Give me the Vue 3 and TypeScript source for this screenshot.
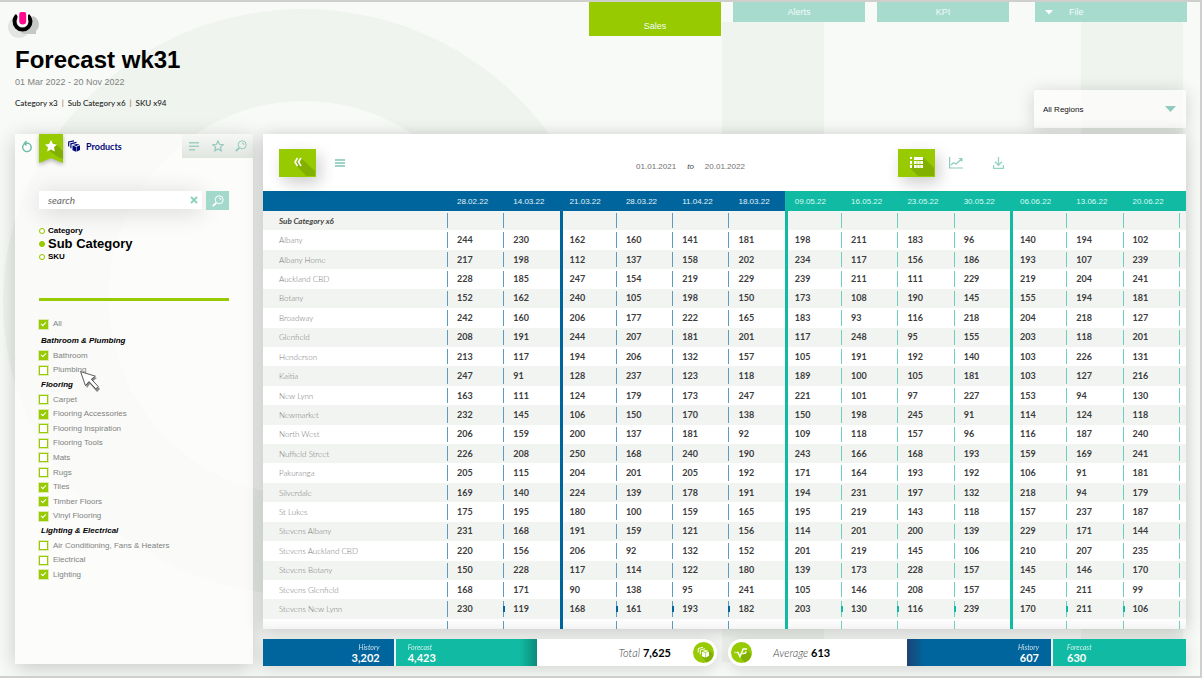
<script setup lang="ts">
import { ref } from 'vue'

interface Item { name: string; checked: boolean }
interface Group { title: string; items: Item[] }

const tabs: string[] = ['Sales', 'Alerts', 'KPI']
const levels: string[] = ['Category', 'Sub Category', 'SKU']
const level = ref('Sub Category')
const query = ref('')
const all = ref(true)

const make = (title: string, items: [string, boolean][]): Group => ({
  title,
  items: items.map(([name, checked]) => ({ name, checked })),
})

const groups = ref<Group[]>([
  make('Bathroom & Plumbing', [['Bathroom', true], ['Plumbing', false]]),
  make('Flooring', [
    ['Carpet', false], ['Flooring Accessories', true], ['Flooring Inspiration', false],
    ['Flooring Tools', false], ['Mats', false], ['Rugs', false], ['Tiles', true],
    ['Timber Floors', true], ['Vinyl Flooring', true],
  ]),
  make('Lighting & Electrical', [
    ['Air Conditioning, Fans & Heaters', false], ['Electrical', false], ['Lighting', true],
  ]),
])

const dates: string[] = [
  '28.02.22', '14.03.22', '21.03.22', '28.03.22', '11.04.22', '18.03.22', '09.05.22',
  '16.05.22', '23.05.22', '30.05.22', '06.06.22', '13.06.22', '20.06.22',
]

const rows: [string, number[]][] = [
  ['Albany', [244, 230, 162, 160, 141, 181, 198, 211, 183, 96, 140, 194, 102]],
  ['Albany Home', [217, 198, 112, 137, 158, 202, 234, 117, 156, 186, 193, 107, 239]],
  ['Auckland CBD', [228, 185, 247, 154, 219, 229, 239, 211, 111, 229, 219, 204, 241]],
  ['Botany', [152, 162, 240, 105, 198, 150, 173, 108, 190, 145, 155, 194, 181]],
  ['Broadway', [242, 160, 206, 177, 222, 165, 183, 93, 116, 218, 204, 218, 127]],
  ['Glenfield', [208, 191, 244, 207, 181, 201, 117, 248, 95, 155, 203, 118, 201]],
  ['Henderson', [213, 117, 194, 206, 132, 157, 105, 191, 192, 140, 103, 226, 131]],
  ['Kaitia', [247, 91, 128, 237, 123, 118, 189, 100, 105, 181, 103, 127, 216]],
  ['New Lynn', [163, 111, 124, 179, 173, 247, 221, 101, 97, 227, 153, 94, 130]],
  ['Newmarket', [232, 145, 106, 150, 170, 138, 150, 198, 245, 91, 114, 124, 118]],
  ['North West', [206, 159, 200, 137, 181, 92, 109, 118, 157, 96, 116, 187, 240]],
  ['Nuffield Street', [226, 208, 250, 168, 240, 190, 243, 166, 168, 193, 159, 169, 241]],
  ['Pakuranga', [205, 115, 204, 201, 205, 192, 171, 164, 193, 192, 106, 91, 181]],
  ['Silverdale', [169, 140, 224, 139, 178, 191, 194, 231, 197, 132, 218, 94, 179]],
  ['St Lukes', [175, 195, 180, 100, 159, 165, 195, 219, 143, 118, 157, 237, 187]],
  ['Stevens Albany', [231, 168, 191, 159, 121, 156, 114, 201, 200, 139, 229, 171, 144]],
  ['Stevens Auckland CBD', [220, 156, 206, 92, 132, 152, 201, 219, 145, 106, 210, 207, 235]],
  ['Stevens Botany', [150, 228, 117, 114, 122, 180, 139, 173, 228, 157, 145, 146, 170]],
  ['Stevens Glenfield', [168, 171, 90, 138, 95, 241, 105, 146, 208, 157, 245, 211, 99]],
  ['Stevens New Lynn', [230, 119, 168, 161, 193, 182, 203, 130, 116, 239, 170, 211, 106]],
]

const cellClass = (i: number) => ({
  forecast: i >= 6,
  thick: i === 2 || i === 6 || i === 10,
})
</script>

<template>
  <div class="page">
    <svg class="backdrop" width="1202" height="678" aria-hidden="true">
      <path
        fill="#eff4ee" fill-rule="evenodd"
        d="M3 302a300 293 0 1 0 600 0a300 293 0 1 0 -600 0zM109 298a195 197 0 1 0 390 0a195 197 0 1 0 -390 0z"
      />
      <path fill="#eff4ee" d="M722 22h102v640h-102zM1081 22h102v640h-102z" />
    </svg>

    <header class="top">
      <div class="brand">
        <svg class="logo" width="36" height="32" viewBox="0 0 36 32" aria-hidden="true">
          <circle cx="12" cy="19" r="11" fill="#e3e5e2" />
          <path fill="#c6c8c6" d="M14 25l12-17a9 9 0 0 1 3 15v3H17z" />
          <path fill="none" stroke="#000" stroke-width="4" d="M10.200 7.500a8 8 0 1 0 10.600 0" />
          <path fill="#fff" d="M10.500 3h10.500v10q0 5.500-5.300 5.500t-5.200-5.500z" />
          <path fill="#ff0a8c" d="M12.200 6q0-2 2-2h3q2 0 2 2v7q0 3.500-3.500 3.500t-3.500-3.500z" />
        </svg>
        <h1>Forecast wk31</h1>
        <p class="period">01 Mar 2022 - 20 Nov 2022</p>
        <p class="crumbs"><span>Category x3</span><i>|</i><span>Sub Category x6</span><i>|</i><span>SKU x94</span></p>
      </div>
      <div class="controls">
        <nav>
          <button v-for="(t, i) in tabs" :key="t" type="button" :class="['tab', { active: i === 0 }]">{{ t }}</button>
          <button type="button" class="tab file">
            <svg width="8" height="5" viewBox="0 0 8 5" aria-hidden="true"><path fill="#fff" d="M0 0h8l-4 4.500z" /></svg>
            <span>File</span>
          </button>
        </nav>
        <div class="region">
          <select aria-label="Region"><option>All Regions</option></select>
          <svg width="11" height="6" viewBox="0 0 11 6" aria-hidden="true"><path fill="#8fcbbd" d="M0 0h11l-5.500 6z" /></svg>
        </div>
      </div>
    </header>

    <main>
      <aside class="side">
        <div class="side-tabs">
          <button type="button" class="icon reset" aria-label="Reset">
            <svg width="12" height="13" viewBox="0 0 12 13" fill="none" stroke="#6fbcaa" stroke-width="1.400"><path d="M7.500 3.300A4.300 4.300 0 1 1 3.200 4M7.600 3.300H3.800M5.500 1L3.300 3.300l2.200 2.200" /></svg>
          </button>
          <button type="button" class="icon ribbon" aria-label="Favourites">
            <svg width="24" height="30" viewBox="0 0 24 30">
              <path fill="#97ca00" d="M0 0h24v29l-12-5-12 5z" />
              <path fill="#82b000" d="M16 9l8 8v8l-4-1.500L9 16z" />
              <path fill="#fff" d="M12 6l1.900 3.900 4.100.5-3 2.900.8 4.200-3.800-2-3.800 2 .8-4.200-3-2.900 4.100-.5z" />
            </svg>
          </button>
          <div class="product">
            <svg width="12" height="12" viewBox="0 0 12 12" aria-hidden="true">
              <path fill="none" stroke="#000a78" stroke-width="1.200" d="M.7 6.500V2L6 .8M2.900 8.300V3.800L8.500 2.400" />
              <path fill="#000a78" d="M4.500 5.600L8 6.700V11.800L4.500 10.300zM8.500 6.700l3.500-1.400v4.800L8.500 11.800zM5 4.900l3.500-1 3 .7-3.200 1.300z" />
            </svg>
            <strong>Products</strong>
          </div>
          <div class="side-tools">
            <button type="button" class="icon" aria-label="List">
              <svg width="10" height="9" viewBox="0 0 10 9"><path fill="#9dcfc2" d="M0 0h10v1.500H0zM0 3.500h10V5H0zM0 7h6v1.500H0z" /></svg>
            </button>
            <button type="button" class="icon" aria-label="Starred">
              <svg width="12" height="12" viewBox="0 0 12 12"><path fill="none" stroke="#93c8bb" stroke-width="1.200" d="M6 1l1.500 3.300 3.600.4-2.700 2.400.8 3.600L6 8.900l-3.200 1.800.8-3.600L.9 4.700l3.600-.4z" /></svg>
            </button>
            <button type="button" class="icon" aria-label="Find">
              <svg width="12" height="12" viewBox="0 0 12 12"><g fill="none" stroke="#93c8bb"><circle cx="7.200" cy="4.800" r="4" /><path d="M7 3q2 0 2 2" /><path stroke-width="1.700" d="M4.200 7.800L.8 11.200" /></g></svg>
            </button>
          </div>
        </div>

        <div class="side-body">
          <div class="search">
            <div class="field">
              <input v-model="query" type="text" placeholder="search" aria-label="Search products" />
              <button type="button" class="icon" aria-label="Clear search">
                <svg width="8" height="8" viewBox="0 0 8 8"><path stroke="#93d0c1" stroke-width="2" d="M1 1l6 6M7 1l-6 6" /></svg>
              </button>
            </div>
            <button type="button" class="go" aria-label="Search">
              <svg width="12" height="12" viewBox="0 0 12 12"><g fill="none" stroke="#fff"><circle cx="7.200" cy="4.800" r="4" /><path d="M7 3q2 0 2 2" /><path stroke-width="1.700" d="M4.200 7.800L.8 11.200" /></g></svg>
            </button>
          </div>

          <div class="levels">
            <label v-for="l in levels" :key="l" :class="{ on: l === level }">
              <input v-model="level" type="radio" name="level" :value="l" />{{ l }}
            </label>
          </div>

          <hr />

          <label class="check"><input v-model="all" type="checkbox" />All</label>
          <div class="filters">
            <template v-for="g in groups" :key="g.title">
              <h2>{{ g.title }}</h2>
              <label v-for="it in g.items" :key="it.name" class="check">
                <input v-model="it.checked" type="checkbox" />{{ it.name }}
                <svg v-if="it.name === 'Plumbing'" class="pointer" width="20" height="22" viewBox="0 0 20 22" aria-hidden="true">
                  <path fill="#8a8c8a" d="M2 2l15 5-4 3 7 8-3 3-7-8-3 4z" />
                  <path fill="#fff" stroke="#333" stroke-width=".8" d="M.6.6l14.800 4.600-4 3 6.800 7.300-2.400 2.400L9 10.600l-3.600 4z" />
                </svg>
              </label>
            </template>
          </div>
        </div>
      </aside>

      <section class="content">
        <div class="sheet">
          <div class="toolbar">
            <button type="button" class="green" aria-label="Collapse">
              <svg width="37" height="28" viewBox="0 0 37 28">
                <path fill="#82b000" d="M22 9l14 13v5H27L16 15z" />
                <path fill="none" stroke="#fff" stroke-width="1.600" d="M18.500 9l-2.500 4 2.500 4M22 9l-2.500 4 2.500 4" />
              </svg>
            </button>
            <button type="button" class="icon menu" aria-label="Menu">
              <svg width="10" height="8" viewBox="0 0 10 8"><path fill="#9fd3c6" d="M0 0h10v2H0zM0 3h10v2H0zM0 6h10v2H0z" /></svg>
            </button>
            <p class="range"><span>01.01.2021</span><em>to</em><span>20.01.2022</span></p>
            <div class="views">
              <button type="button" class="green" aria-label="Table view">
                <svg width="37" height="28" viewBox="0 0 37 28">
                  <path fill="#82b000" d="M25 8l11 11v8H20l-8-8z" />
                  <path fill="#fff" d="M12 8h2v2h-2zM16 8h9v3h-9zM12 12h2v3h-2zM12 16h2v3h-2zM16 12h9v3h-9zM16 16h9v3h-9z" />
                  <path stroke="#97ca00" stroke-width=".6" d="M19 11v8M22 11v8" />
                </svg>
              </button>
              <button type="button" class="icon" aria-label="Chart view">
                <svg width="14" height="12" viewBox="0 0 14 12"><g fill="none" stroke="#8fcbbd"><path d="M.6 0v11H14" stroke-width="1.200" /><path stroke-width="1.200" d="M2 8l2.500-2.200L7 7l5.500-5M9.800 1.500h3v3" /></g></svg>
              </button>
              <button type="button" class="icon" aria-label="Download">
                <svg width="11" height="12" viewBox="0 0 11 12"><path fill="none" stroke="#93d3c4" stroke-width="1.300" d="M5.500 0v8M2 4.800l3.500 3.500L9 4.800M.6 8v3.300h9.800V8" /></svg>
              </button>
            </div>
          </div>

          <table>
            <colgroup>
              <col class="name-col" />
              <col v-for="d in dates" :key="d" />
              <col class="end-col" />
            </colgroup>
            <thead>
              <tr>
                <th aria-label="Store"></th>
                <th v-for="(d, i) in dates" :key="d" scope="col" :class="cellClass(i)">{{ d }}</th>
                <td class="forecast"></td>
              </tr>
            </thead>
            <tbody>
              <tr class="sub">
                <th scope="row">Sub Category x6</th>
                <td v-for="(d, i) in dates" :key="d" :class="cellClass(i)"></td>
                <td class="forecast"></td>
              </tr>
              <tr v-for="[name, values] in rows" :key="name">
                <th scope="row">{{ name }}</th>
                <td v-for="(v, i) in values" :key="i" :class="cellClass(i)">{{ v }}</td>
                <td class="forecast"></td>
              </tr>
            </tbody>
            <tfoot>
              <tr>
                <td class="blank"></td>
                <td v-for="(d, i) in dates" :key="d" :class="cellClass(i)"></td>
                <td class="forecast"></td>
              </tr>
            </tfoot>
          </table>
        </div>

        <footer>
          <div class="summary total">
            <div class="box history"><em>History</em><b>3,202</b></div>
            <div class="box future shade"><em>Forecast</em><b>4,423</b></div>
            <div class="figure">
              <p><em>Total</em> <b>7,625</b></p>
              <svg width="21" height="21" viewBox="0 0 21 21" aria-hidden="true">
                <circle cx="10.500" cy="10.500" r="10.500" fill="#97ca00" />
                <path fill="#82b000" d="M16 8l4.500 4.500a10 10 0 0 1-7 8L9 15z" />
                <path fill="none" stroke="#fff" d="M5.200 10.500V6.500L10 5.300M7.300 12.500V8L12 6.800" />
                <path fill="#fff" d="M9 9.800l3 1v4.700l-3-1.300zM12.500 10.800l3.500-1.300v4.500l-3.500 1.500zM9.500 9.200l3.200-1.100 3 .8-3.200 1.200z" />
              </svg>
            </div>
          </div>
          <div class="summary average">
            <div class="figure">
              <svg width="21" height="21" viewBox="0 0 21 21" aria-hidden="true">
                <circle cx="10.500" cy="10.500" r="10.500" fill="#97ca00" />
                <path fill="#82b000" d="M16 8l4.500 4.500a10 10 0 0 1-7 8L9 15z" />
                <path fill="none" stroke="#fff" stroke-width="1.400" d="M3.500 10.500h1M5.500 10.500h1.500l2 4 3.200-7.500H16M11.500 11.500q3 .5 4-2" />
              </svg>
              <p><em>Average</em> <b>613</b></p>
            </div>
            <div class="box history shade"><em>History</em><b>607</b></div>
            <div class="box future"><em>Forecast</em><b>630</b></div>
          </div>
        </footer>
      </section>
    </main>
  </div>
</template>

<style>
body {
  margin: 0;
  background: #f8faf7;
}
</style>

<style scoped>
.page {
  position: relative;
  box-sizing: border-box;
  padding: 0 14px 10px 15px;
  border: solid #cfd0ce;
  border-width: 2px 2px 2px 0;
  overflow: hidden;
  background: #f8faf7;
  font-family: "Liberation Sans", Arial, sans-serif;
}

.backdrop {
  position: absolute;
  top: -2px;
  left: 0;
}

h1, h2, p { margin: 0; }

button {
  border: 0;
  padding: 0;
  background: none;
  font: inherit;
  cursor: pointer;
}

.icon {
  display: flex;
  align-items: center;
  justify-content: center;
}

svg { flex: none; display: block; }

.top {
  position: relative;
  display: flex;
  justify-content: space-between;
  padding-bottom: 6px;
}

.brand { padding-top: 6px; }

.logo { margin-left: -8px; }

h1 {
  margin-top: 4px;
  color: #000;
  font-size: 24px;
  line-height: 32px;
}

.period {
  color: #808280;
  font-size: 9px;
  line-height: 12px;
}

.crumbs {
  display: flex;
  gap: 4px;
  margin-top: 9px;
  color: #222;
  font: 500 8px/12px Lato, sans-serif;
}

.crumbs i { color: #a86a4a; font-style: normal; }

.controls { margin-right: -1px; }

nav {
  display: flex;
  align-items: flex-start;
  gap: 12px;
}

.tab {
  width: 132px;
  height: 20px;
  background: #a6dbcd;
  color: #f2fbf8;
  font-size: 9px;
}

.tab.active {
  height: 34px;
  padding-top: 14px;
  background: #97ca00;
}

.tab.file {
  display: flex;
  align-items: center;
  gap: 16px;
  width: 152px;
  margin-left: 14px;
  padding-left: 10px;
}

.region {
  display: flex;
  align-items: center;
  width: 152px;
  height: 38px;
  margin: 54px 1px 0 auto;
  padding-right: 10px;
  box-sizing: border-box;
  background: rgba(252, 252, 250, .8);
  box-shadow: 0 2px 18px rgba(0, 0, 0, .16);
}

.region select {
  flex: 1;
  height: 100%;
  padding-left: 9px;
  appearance: none;
  border: 0;
  background: none;
  color: #111;
  font: 8px "Liberation Sans", Arial, sans-serif;
}

main {
  position: relative;
  display: flex;
  align-items: stretch;
  gap: 10px;
}

.side {
  width: 238px;
  flex: none;
  box-sizing: border-box;
  margin-bottom: 2px;
  background: rgba(253, 253, 252, .75);
  box-shadow: 0 4px 20px rgba(0, 0, 0, .2);
}

.side-tabs {
  display: flex;
  height: 24px;
}

.reset { width: 24px; }

.ribbon {
  width: 24px;
  height: 30px;
  filter: drop-shadow(0 2px 2px rgba(0, 0, 0, .3));
}

.product {
  display: flex;
  flex: 1;
  align-items: center;
  gap: 6px;
  padding-left: 5px;
  color: #000a78;
  font: 9px Lato, sans-serif;
}

.side-tools {
  display: flex;
  width: 71px;
  background: linear-gradient(#f7f8f6, #dfe5df);
}

.side-tools .icon { flex: 1; }

.side-body { padding: 33px 24px 0; }

.search { display: flex; gap: 4px; }

.field {
  display: flex;
  flex: 1;
  align-items: center;
  min-width: 0;
  height: 18px;
  padding: 0 4px 0 9px;
  background: #fff;
  box-shadow: 0 3px 24px rgba(0, 0, 0, .16);
}

.field input {
  flex: 1;
  min-width: 0;
  padding: 0;
  border: 0;
  outline: 0;
  background: none;
  font: italic 10px Lato, sans-serif;
}

.field input::placeholder { color: #666; opacity: 1; }

.go {
  display: flex;
  align-items: center;
  justify-content: center;
  width: 23px;
  height: 19px;
  background: #a3d9cb;
}

.levels {
  display: flex;
  flex-direction: column;
  margin-top: 15px;
  color: #000;
  font-weight: bold;
  font-size: 8px;
  line-height: 12px;
}

.levels label {
  display: flex;
  align-items: center;
  gap: 3px;
}

.levels .on {
  font-size: 13px;
  line-height: 14px;
}

.levels input {
  width: 6px;
  height: 6px;
  margin: 0;
  appearance: none;
  box-sizing: border-box;
  border: 1px solid #97ca00;
  outline: 1px solid rgba(151, 202, 0, .3);
  outline-offset: -1px;
  border-radius: 50%;
  background: #fff;
}

.levels .on input { background: #97ca00; }

hr {
  height: 3px;
  margin: 35px 0 16px;
  border: 0;
  background: #97ca00;
}

.check {
  position: relative;
  display: flex;
  align-items: center;
  gap: 5px;
  color: #808280;
  font-size: 8px;
  line-height: 14px;
}

.check input {
  display: flex;
  justify-content: center;
  width: 9px;
  height: 9px;
  margin: 0;
  appearance: none;
  box-sizing: border-box;
  border: 1px solid #97ca00;
  outline: 1px solid rgba(151, 202, 0, .3);
  background: #fff;
}

.check input:checked { background: #97ca00; }

.check input:checked::after {
  content: "";
  width: 2px;
  height: 4px;
  border: solid #fff;
  border-width: 0 1px 1px 0;
  transform: rotate(45deg);
}

.filters {
  display: grid;
  grid-auto-rows: 1fr;
  height: 248px;
  margin-top: 3px;
  align-items: center;
}

h2 {
  padding-left: 2px;
  color: #000;
  font-size: 8px;
  font-style: italic;
  line-height: 14px;
}

.pointer {
  position: absolute;
  top: 8px;
  left: 41px;
  z-index: 1;
}

.content {
  flex: 1;
  min-width: 0;
}

.sheet {
  background: #fff;
  box-shadow: 0 2px 16px rgba(0, 0, 0, .22);
}

.toolbar {
  display: flex;
  align-items: center;
  height: 57px;
  padding-left: 16px;
}

.green {
  width: 37px;
  height: 28px;
  background: #97ca00;
  box-shadow: 4px 6px 16px rgba(0, 0, 0, .2);
}

.menu { margin-left: 19px; }

.range {
  display: flex;
  flex: 1;
  justify-content: center;
  gap: 11px;
  padding: 8px 0 0 138px;
  color: #707070;
  font-size: 8px;
}

.range em { color: #444; }

.views {
  display: flex;
  align-items: center;
  width: 288px;
}

.views .icon { width: 42px; }

table {
  width: 100%;
  height: 438px;
  table-layout: fixed;
  border-spacing: 0;
  text-align: left;
}

.name-col { width: 184px; }
.end-col { width: 7px; }

th, td { padding: 0; }

thead tr { height: 20px; }

thead th, thead td {
  background: #00659c;
  color: #e3f2f9;
  font: 8px "Liberation Sans", Arial, sans-serif;
}

thead th { padding-left: 10px; }
thead .forecast { background: #11baa2; color: #d9faf4; }

tbody tr:nth-child(odd) { background: #f2f4f2; }

tbody th {
  padding-left: 16px;
  color: #777;
  font: 300 8px/12px Lato, sans-serif;
}

.sub th {
  color: #444;
  font-weight: bold;
  font-style: italic;
}

tbody td, tfoot td {
  --line: #5c9cc2;
  padding-left: 10px;
  background: linear-gradient(var(--line), var(--line)) 0 2px / 1px calc(100% - 4px) no-repeat;
  color: #3c3c3c;
  font: bold 9px/12px Lato, sans-serif;
}

tbody .forecast, tfoot .forecast { --line: #6fcfbf; }

tbody tr:last-child td:not(.thick, :nth-child(2), :last-child) {
  --mark: #00659c;
  background:
    linear-gradient(var(--mark), var(--mark)) 0 7px / 2px 6px no-repeat,
    linear-gradient(var(--line), var(--line)) 0 2px / 1px calc(100% - 4px) no-repeat;
}

tbody tr:last-child td.forecast:not(.thick, :last-child) { --mark: #11baa2; }

tbody .thick, tfoot .thick {
  --line: #00659c;
  background-position: 0 0;
  background-size: 3px 100%;
}

tbody .thick.forecast, tfoot .thick.forecast { --line: #11baa2; }

tfoot tr {
  height: 10px;
  background: linear-gradient(#fff, #f3f4f3);
}

tfoot td { background-size: 1px 100%; line-height: 1px; }
tbody td:last-child, tfoot td:last-child { padding: 0; }
tfoot .blank { padding: 0; background: none; }

footer {
  display: flex;
  gap: 11px;
  margin-top: 10px;
}

.summary {
  display: grid;
  height: 27px;
  box-shadow: 0 4px 16px rgba(0, 0, 0, .15);
}

.total {
  flex: 454;
  grid-template-columns: 133fr 142fr 180fr;
  border-radius: 0 14px 14px 0;
}

.average {
  flex: 458;
  grid-template-columns: 179fr 146fr 133fr;
  border-radius: 14px 0 0 14px;
}

.box {
  display: flex;
  flex-direction: column;
  justify-content: center;
  box-sizing: border-box;
  padding: 0 14px 0 12px;
  color: #fff;
  font: 11px/11px Lato, sans-serif;
}

.box em { font-size: 7px; line-height: 9px; opacity: .8; }

.history {
  align-items: flex-end;
  border-right: 2px solid #eef1ee;
  background: #00659c;
}

.future { background: #11baa2; }
.average .future { padding-left: 14px; }
.future.shade { background: linear-gradient(90deg, #11baa2 88%, #0d8b79); }
.history.shade { background: linear-gradient(90deg, #1c4376, #00659c 12%); padding-right: 12px; }

.figure {
  display: flex;
  align-items: center;
  box-sizing: border-box;
  background: #fff;
  color: #000;
  font: 11px Lato, sans-serif;
}

.figure em { color: #444; font-weight: 300; }

.total .figure {
  justify-content: flex-end;
  gap: 22px;
  padding-right: 3px;
  border-radius: 0 14px 14px 0;
}

.average .figure {
  gap: 21px;
  padding-left: 3px;
  border-radius: 14px 0 0 14px;
}
</style>
